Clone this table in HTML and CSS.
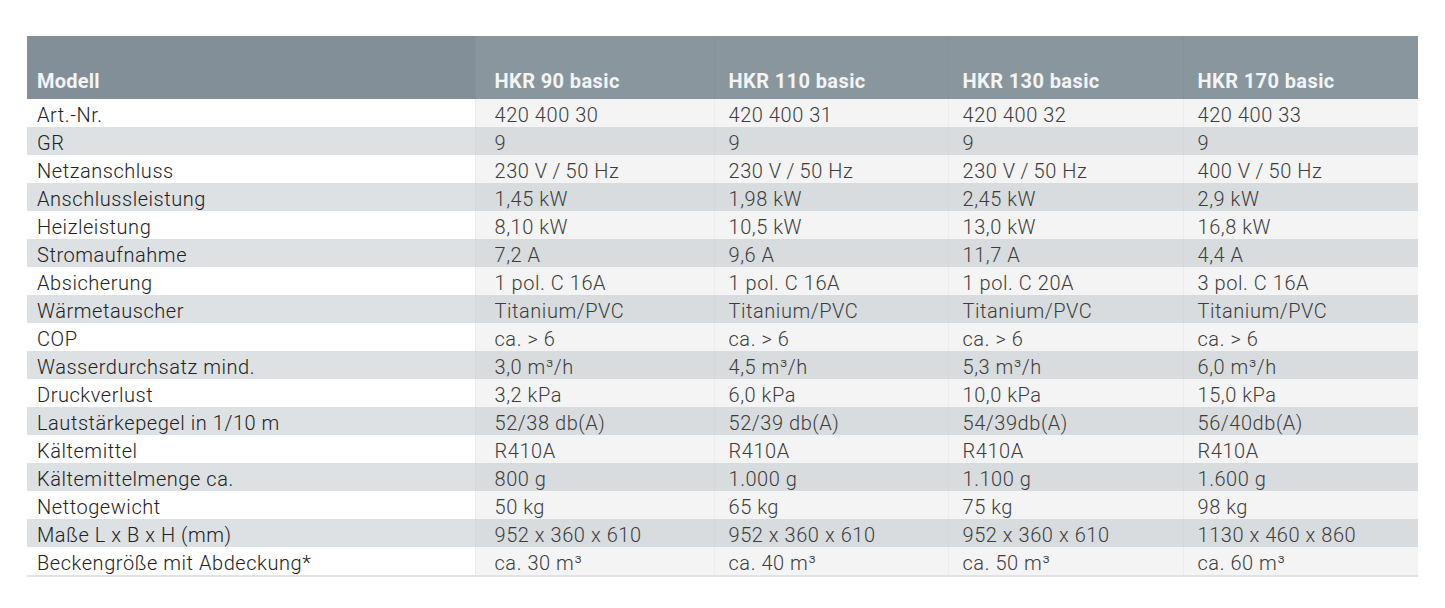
FILE: index.html
```html
<!DOCTYPE html>
<html lang="de">
<head>
<meta charset="utf-8">
<title>HKR basic – Technische Daten</title>
<link rel="stylesheet" href="styles.css">
</head>
<body>
<div class="page">
  <table class="spec">
    <colgroup>
      <col class="c-label">
      <col class="c-a">
      <col class="c-b">
      <col class="c-c">
      <col class="c-d">
    </colgroup>
    <thead>
      <tr>
        <th class="label">Modell</th>
        <th class="first">HKR 90 basic</th>
        <th>HKR 110 basic</th>
        <th>HKR 130 basic</th>
        <th>HKR 170 basic</th>
      </tr>
    </thead>
    <tbody>
      <tr><td class="label">Art.-Nr.</td><td class="first">420 400 30</td><td>420 400 31</td><td>420 400 32</td><td>420 400 33</td></tr>
      <tr><td class="label">GR</td><td class="first">9</td><td>9</td><td>9</td><td>9</td></tr>
      <tr><td class="label">Netzanschluss</td><td class="first">230 V&#8201;/&#8201;50 Hz</td><td>230 V&#8201;/&#8201;50 Hz</td><td>230 V&#8201;/&#8201;50 Hz</td><td>400 V&#8201;/&#8201;50 Hz</td></tr>
      <tr><td class="label">Anschlussleistung</td><td class="first">1,45 kW</td><td>1,98 kW</td><td>2,45 kW</td><td>2,9 kW</td></tr>
      <tr><td class="label">Heizleistung</td><td class="first">8,10 kW</td><td>10,5 kW</td><td>13,0 kW</td><td>16,8 kW</td></tr>
      <tr><td class="label">Stromaufnahme</td><td class="first">7,2 A</td><td>9,6 A</td><td>11,7 A</td><td>4,4 A</td></tr>
      <tr><td class="label">Absicherung</td><td class="first">1 pol. C 16A</td><td>1 pol. C 16A</td><td>1 pol. C 20A</td><td>3 pol. C 16A</td></tr>
      <tr><td class="label">Wärmetauscher</td><td class="first">Titanium/PVC</td><td>Titanium/PVC</td><td>Titanium/PVC</td><td>Titanium/PVC</td></tr>
      <tr><td class="label">COP</td><td class="first">ca. &gt; 6</td><td>ca. &gt; 6</td><td>ca. &gt; 6</td><td>ca. &gt; 6</td></tr>
      <tr><td class="label">Wasserdurchsatz mind.</td><td class="first">3,0 m³/h</td><td>4,5 m³/h</td><td>5,3 m³/h</td><td>6,0 m³/h</td></tr>
      <tr><td class="label">Druckverlust</td><td class="first">3,2 kPa</td><td>6,0 kPa</td><td>10,0 kPa</td><td>15,0 kPa</td></tr>
      <tr><td class="label">Lautstärkepegel in 1/10 m</td><td class="first">52/38 db(A)</td><td>52/39 db(A)</td><td>54/39db(A)</td><td>56/40db(A)</td></tr>
      <tr><td class="label">Kältemittel</td><td class="first">R410A</td><td>R410A</td><td>R410A</td><td>R410A</td></tr>
      <tr><td class="label">Kältemittelmenge ca.</td><td class="first">800 g</td><td>1.000 g</td><td>1.100 g</td><td>1.600 g</td></tr>
      <tr><td class="label">Nettogewicht</td><td class="first">50 kg</td><td>65 kg</td><td>75 kg</td><td>98 kg</td></tr>
      <tr><td class="label">Maße L x B x H (mm)</td><td class="first">952 x 360 x 610</td><td>952 x 360 x 610</td><td>952 x 360 x 610</td><td>1130 x 460 x 860</td></tr>
      <tr><td class="label">Beckengröße mit Abdeckung*</td><td class="first">ca. 30 m³</td><td>ca. 40 m³</td><td>ca. 50 m³</td><td>ca. 60 m³</td></tr>
    </tbody>
  </table>
</div>
</body>
</html>
```

FILE: styles.css
```css
html, body {
  margin: 0;
  padding: 0;
  background: #ffffff;
}

.page {
  padding: 36px 0 0 27px;
}

.spec {
  width: 1391px;
  border-collapse: collapse;
  table-layout: fixed;
  font-family: Roboto, "Liberation Sans", sans-serif;
  font-size: 20px;
  border-bottom: 2px solid #dfe3e6;
}

.c-label { width: 448px; }
.c-a { width: 239px; }
.c-b { width: 234px; }
.c-c { width: 235px; }
.c-d { width: 235px; }

.spec th {
  height: 63px;
  box-sizing: border-box;
  padding: 0 0 6px 14px;
  line-height: 24px;
  vertical-align: bottom;
  text-align: left;
  font-weight: 700;
  letter-spacing: 0.4px;
  color: #f3f4f5;
  background: #8a969e;
  border-left: 1px solid #86929a;
  white-space: nowrap;
}

.spec th.label {
  background: #838f98;
  padding-left: 10px;
  border-left: none;
  letter-spacing: 0.2px;
}

.spec td {
  height: 28px;
  box-sizing: border-box;
  padding: 4px 0 0 14px;
  line-height: 24px;
  font-weight: 300;
  letter-spacing: 0.55px;
  color: #3c3c3c;
  background: #f4f4f4;
  border-left: 1px solid #ececec;
  white-space: nowrap;
  vertical-align: top;
}

.spec td.label {
  padding-left: 10px;
  color: #222222;
  background: #ffffff;
  border-left: none;
}

.spec .first {
  padding-left: 19px;
}

.spec tbody tr:nth-child(even) td {
  background: #d8dcdf;
  border-left-color: #d4d8db;
}

.spec tbody tr:nth-child(even) td.label {
  background: #dde1e4;
}
```
